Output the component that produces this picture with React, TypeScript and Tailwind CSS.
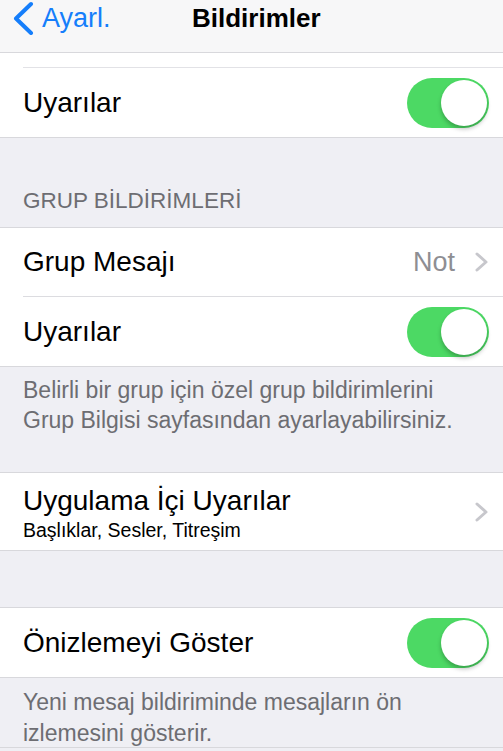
import React from 'react';

const font = { fontFamily: '"Liberation Sans", Arial, sans-serif' };

function Toggle() {
    return (
        <div className="relative w-[82px] h-[50px] rounded-full bg-[#4cd964] shrink-0">
            <div className="absolute right-[2px] top-[2px] w-[46px] h-[46px] rounded-full bg-white shadow-[0_3px_4px_rgba(0,0,0,0.25)]" />
        </div>
    );
}

function Chevron() {
    return (
        <svg width="14" height="20" viewBox="0 0 14 20" className="shrink-0">
            <path d="M2 2 L11 10 L2 18" fill="none" stroke="#c7c7cc" strokeWidth="3" strokeLinecap="round" strokeLinejoin="round" />
        </svg>
    );
}

function Row({ label, right, inset }: { label: string; right: React.ReactNode; inset?: boolean }) {
    return (
        <div className="bg-white pl-[23px]">
            <div className={`h-[69px] flex items-center justify-between pr-[14px] ${inset ? 'border-b border-[#dcdce0]' : ''}`}>
                <span className="text-[28px] text-black">{label}</span>
                {right}
            </div>
        </div>
    );
}

export default function App() {
    return (
        <div className="w-[503px] h-[751px] overflow-hidden bg-[#efeff4]" style={font}>
            {/* Nav bar */}
            <div className="h-[53px] bg-[#f7f7f8] border-b border-[#d8d8dc] flex items-start pt-[1px] relative">
                <div className="flex items-center h-[34px] pl-[12px] gap-[8px] text-[#157efb]">
                    <svg width="22" height="34" viewBox="0 0 22 34">
                        <path d="M19 3 L4 17.5 L19 32" fill="none" stroke="#157efb" strokeWidth="4" strokeLinecap="round" strokeLinejoin="round" />
                    </svg>
                    <span className="text-[27px]">Ayarl.</span>
                </div>
                <span className="absolute left-[192px] top-[1px] h-[34px] flex items-center text-[26px] font-bold text-black">Bildirimler</span>
            </div>

            {/* first group (scrolled under the bar) */}
            <div className="bg-white border-b border-[#d8d8dc]">
                <div className="h-[15px] ml-[23px] border-b border-[#e2e2e6]" />
                <div className="pl-[23px]">
                    <div className="h-[69px] flex items-center justify-between pr-[14px]">
                        <span className="text-[28px] text-black">Uyarılar</span>
                        <Toggle />
                    </div>
                </div>
            </div>

            {/* section header */}
            <div className="h-[89px] flex items-end pl-[23px] pb-[9px]">
                <span className="text-[22.5px] text-[#6d6d72] uppercase">GRUP BİLDİRİMLERİ</span>
            </div>

            <div className="border-y border-[#d8d8dc]">
                <Row
                    label="Grup Mesajı"
                    inset
                    right={
                        <div className="flex items-center gap-[20px]">
                            <span className="text-[27px] text-[#8e8e93]">Not</span>
                            <Chevron />
                        </div>
                    }
                />
                <Row label="Uyarılar" right={<Toggle />} />
            </div>

            <div className="h-[105px] pl-[23px] pt-[8px] text-[23px] leading-[30px] text-[#6d6d72]">
                Belirli bir grup için özel grup bildirimlerini
                <br />
                Grup Bilgisi sayfasından ayarlayabilirsiniz.
            </div>

            <div className="border-y border-[#d8d8dc] bg-white pl-[23px]">
                <div className="h-[77px] flex items-center justify-between pr-[14px]">
                    <div className="flex flex-col pt-[2px]">
                        <span className="text-[28px] leading-[34px] text-black">Uygulama İçi Uyarılar</span>
                        <span className="text-[19.5px] leading-[24px] text-black">Başlıklar, Sesler, Titreşim</span>
                    </div>
                    <Chevron />
                </div>
            </div>

            <div className="h-[56px]" />

            <div className="border-y border-[#d8d8dc]">
                <Row label="Önizlemeyi Göster" right={<Toggle />} />
            </div>

            <div className="h-[70px] pl-[23px] pt-[9px] text-[23px] leading-[31px] text-[#6d6d72] border-b border-[#d8d8dc]">
                Yeni mesaj bildiriminde mesajların ön
                <br />
                izlemesini gösterir.
            </div>
        </div>
    );
}
